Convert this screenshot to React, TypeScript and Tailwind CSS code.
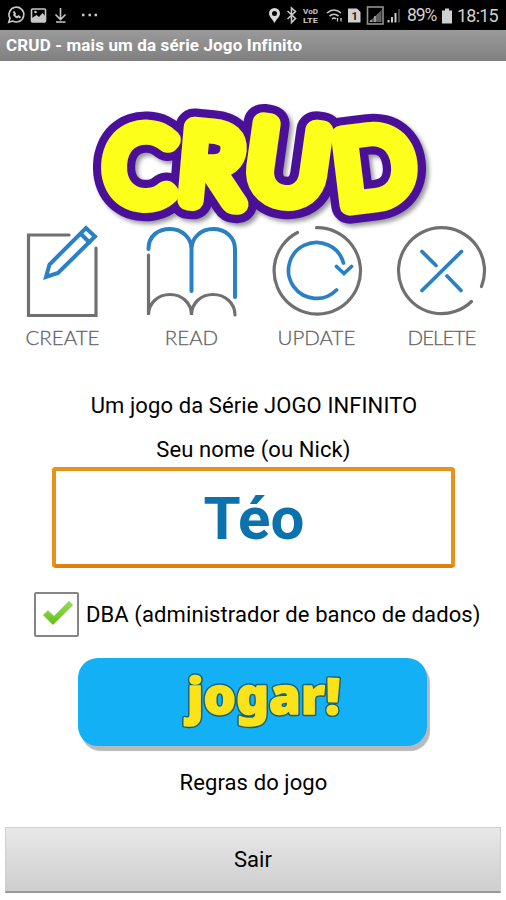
import type { ReactNode } from "react";
import { useState } from "react";

const BLUE = "#2a80c5";
const GRAY = "#707070";

const LOGO_LETTERS = [
	{ char: "C", transform: "translate(139.5 165.5) rotate(3) scale(0.86 0.86)" },
	{ char: "R", transform: "translate(211.5 165) rotate(5) scale(0.88 0.88)" },
	{ char: "U", transform: "translate(288 162.5) rotate(8) scale(0.94 0.88)" },
	{ char: "D", transform: "translate(374 166.5) rotate(-7) scale(0.88 0.85)" },
];

export default function App() {
	return (
		<main className="flex h-[900px] w-[506px] flex-col overflow-hidden bg-white font-['Roboto',sans-serif] text-black">
			<StatusBar />
			<header className="flex h-[31px] shrink-0 items-center bg-linear-to-b from-[#9a9a9a] to-[#808080] pl-[6px] text-[17px] font-bold text-white">
				<h1 className="whitespace-nowrap tracking-[0.14px]">
					CRUD - mais um da série Jogo Infinito
				</h1>
			</header>

			<section className="mt-[35px] h-[260px] shrink-0">
				<CrudLogo />
				<div className="relative flex">
					<Feature label="CREATE" viewBox="0 224 125 96" className="mr-1">
						<path
							d="M69 235H28.500V315.500H96V248"
							stroke={GRAY}
							strokeWidth="3.200"
						/>
						<path
							d="M46 277L49.500 264.500L86 228L95 236.500L58 273Z M80.500 233.500L89.500 242.500"
							stroke={BLUE}
							strokeWidth="4"
						/>
					</Feature>
					<Feature label="READ" viewBox="129 224 125 96">
						<path
							d="M148.500 255V315C148.500 303 158 294.500 170 294.500S191.500 303 191.500 315C191.500 303 201 294.500 213 294.500S235 303 235 315"
							stroke={GRAY}
							strokeWidth="3.200"
						/>
						<path
							d="M148.500 249C148.500 236 158 229 170 229S191.500 238 191.500 249V291M191.500 249C191.500 238 201 229 213 229S235 237 235 249V297"
							stroke={BLUE}
							strokeWidth="4"
						/>
					</Feature>
					<Feature label="UPDATE" viewBox="254 224 125 96">
						<path
							d="M316.500 227.700A43.200 43.200 0 1 1 297.500 232.500"
							stroke={GRAY}
							strokeWidth="3.200"
						/>
						<path
							d="M336.500 290A28 28 0 1 1 343.500 263M336.500 266.500L344 273.500L351.500 266.500"
							stroke={BLUE}
							strokeWidth="3.700"
						/>
					</Feature>
					<Feature
						label="DELETE"
						viewBox="379 224 125 96"
						className="tracking-[-0.9px]"
					>
						<path
							d="M481.500 286.500A43 43 0 1 0 471.500 301.500"
							stroke={GRAY}
							strokeWidth="3.200"
						/>
						<path
							d="M461.500 251.500L422 290.500M422 251.500L436 265.500M447 276L461 290.500"
							stroke={BLUE}
							strokeWidth="3.700"
						/>
					</Feature>
				</div>
			</section>

			<PlayerForm />
		</main>
	);
}

function StatusBar() {
	return (
		<div className="flex h-[30px] shrink-0 items-center bg-black text-[18px] text-[#d0d0d0]">
			<svg
				width="400"
				height="30"
				viewBox="0 0 400 30"
				fill="none"
				stroke="#c8c8c8"
				strokeWidth="1.600"
				className="shrink-0"
			>
				{/* chat */}
				<path d="M8.800 22.200L10 18.300A7.400 7.400 0 1 1 12.700 21Z" />
				<path
					d="M13.500 11.500L15 13.800L14.200 15Q15.500 17 17.200 17.300L18.500 16.300L20.500 17.800"
					strokeWidth="2"
				/>
				{/* gallery */}
				<rect x="31.500" y="9" width="14" height="13" rx="1" />
				<path
					d="M32 20V18L36.500 15L39 17L42.500 13L46 17V22H32Z"
					fill="#c8c8c8"
					stroke="none"
				/>
				<circle cx="35.500" cy="12" r="1.300" fill="#c8c8c8" stroke="none" />
				{/* download */}
				<path d="M60.500 8V19M55.500 14.500L60.500 19.500L65.500 14.500M56 22H65.500" />
				<path d="M82 15H84.500M88.500 15H91M94.500 15H97" strokeWidth="2.300" />
				{/* location */}
				<path
					d="M274.500 23C272 18.500 269 16.500 269 13.500A5.500 5.500 0 0 1 280 13.500C280 16.500 277 18.500 274.500 23ZM274.500 11A2.500 2.500 0 1 0 274.500 16A2.500 2.500 0 1 0 274.500 11Z"
					fill="#d8d8d8"
					fillRule="evenodd"
					stroke="none"
				/>
				{/* bluetooth */}
				<path d="M287.500 11L295.500 18.500L291.500 22.500V8L295.500 11.500L287.500 19" />
				<g
					fill="#c8c8c8"
					stroke="none"
					fontFamily="Roboto, sans-serif"
					fontWeight="700"
					fontSize="8"
				>
					<text x="303" y="14" textLength="15" lengthAdjust="spacingAndGlyphs">
						VoD
					</text>
					<text x="303" y="22.500" textLength="15" lengthAdjust="spacingAndGlyphs">
						LTE
					</text>
				</g>
				{/* wifi */}
				<path d="M327 13Q334 7 341 13M329.500 16Q334 12.500 338.500 16M332 19Q334 17 336 19" />
				<path d="M337.500 21.500V18M341 18V21.500" strokeWidth="1.300" />
				{/* sim */}
				<path d="M348 8.500H357L360.500 12V22.500H348Z" fill="#d0d0d0" stroke="none" />
				<text
					x="351.500"
					y="19.500"
					fontSize="11"
					fontWeight="700"
					fill="#222"
					stroke="none"
					fontFamily="Roboto, sans-serif"
				>
					1
				</text>
				{/* signal */}
				<rect x="367.500" y="7" width="15.500" height="17" stroke="#929292" />
				<path d="M369 22L381.500 10V22Z" fill="#606060" stroke="none" />
				<path d="M371 20V22M375 16V22" stroke="#aaa" />
				<path d="M388.500 20V22.500M392 17V22.500M395.500 13V22.500" strokeWidth="2" />
				<path d="M399 9V22.500" stroke="#555" />
			</svg>
			<div className="flex grow items-center pt-px pl-[7px]">
				<span className="w-[34px] whitespace-nowrap text-[17.5px] tracking-[-1.1px]">
					89%
				</span>
				<svg width="12" height="16" viewBox="0 0 12 16" fill="#d0d0d0">
					<path d="M4 0.500H8V2.500H11V15.500H1V2.500H4Z" />
				</svg>
				<span className="whitespace-nowrap pl-[4px] tracking-[-0.8px]">
					18:15
				</span>
			</div>
		</div>
	);
}

function CrudLogo() {
	return (
		<svg
			width="506"
			height="176"
			viewBox="0 76 506 176"
			className="-mt-[20px] -mb-[28px] block overflow-visible drop-shadow-[3px_3px_2px_rgba(0,0,0,0.4)]"
			fontFamily="Lato, sans-serif"
			fontWeight="300"
			fontSize="117"
			textAnchor="middle"
			strokeLinejoin="round"
		>
			<g fill="#4a109a" stroke="#4a109a" strokeWidth="43">
				<LogoLetters />
			</g>
			<g fill="#fcff1a" stroke="#fcff1a" strokeWidth="24">
				<LogoLetters />
			</g>
		</svg>
	);
}

function LogoLetters() {
	return LOGO_LETTERS.map(({ char, transform }) => (
		<text key={char} y="42" transform={transform}>
			{char}
		</text>
	));
}

type FeatureProps = {
	label: string;
	viewBox: string;
	className?: string;
	children: ReactNode;
};

function Feature({ label, viewBox, className, children }: FeatureProps) {
	return (
		<div
			className={`flex w-[125px] shrink-0 flex-col items-center ${className ?? ""}`}
		>
			<svg
				width="125"
				height="96"
				viewBox={viewBox}
				fill="none"
				strokeLinecap="round"
			>
				{children}
			</svg>
			<span className="mt-[4px] font-['Lato',sans-serif] text-[20.5px] leading-[26px] font-light text-[#555] [-webkit-text-stroke:0.3px_#777]">
				{label}
			</span>
		</div>
	);
}

function PlayerForm() {
	const [name, setName] = useState("Téo");
	const [isDba, setIsDba] = useState(true);

	return (
		<form
			className="flex grow flex-col items-center pt-[36px] text-[22px] leading-[28px] tracking-[0.1px]"
			onSubmit={(event) => event.preventDefault()}
		>
			<p className="pl-[2px] whitespace-nowrap">
				Um jogo da Série JOGO INFINITO
			</p>
			<label htmlFor="nick" className="mt-[16px] pl-px">
				Seu nome (ou Nick)
			</label>
			<input
				id="nick"
				value={name}
				onChange={(event) => setName(event.target.value)}
				className="mt-[3px] h-[101px] w-[403px] rounded-[4px] border-4 border-[#e8921e] border-b-[#df8010] bg-white pt-[2px] pl-[2px] text-center text-[60px] font-bold text-[#0b72ad] outline-none"
			/>
			<label className="mt-[24px] flex items-center self-start pl-[34px]">
				<input
					type="checkbox"
					className="sr-only"
					checked={isDba}
					onChange={(event) => setIsDba(event.target.checked)}
				/>
				<span className="flex size-[45px] items-center justify-center rounded-[2px] border-2 border-[#858585]">
					{isDba ? <CheckMark /> : null}
				</span>
				<span className="pl-[7px] whitespace-nowrap">
					DBA (administrador de banco de dados)
				</span>
			</label>
			<button
				type="submit"
				className="mt-[21px] mr-[2px] h-[88px] w-[349px] rounded-[20px] bg-[#13b0f5] shadow-[3px_5px_1px_#b9b9bd]"
			>
				<svg width="349" height="88" viewBox="78 658 349 88">
					<g
						fontFamily="'Noto Sans', sans-serif"
						fontWeight="900"
						fontSize="50"
						strokeLinejoin="round"
					>
						<g fill="#12627a" stroke="#12627a" strokeWidth="4.500">
							<PlayCaption />
						</g>
						<g fill="#fbe219" stroke="#fbe219" strokeWidth="1.600">
							<PlayCaption />
						</g>
					</g>
				</svg>
			</button>
			<a href="#regras" className="mt-[23px] pl-px">
				Regras do jogo
			</a>
			<button
				type="button"
				className="mt-[30px] h-[66px] w-[496px] border border-[#cfcfcf] border-b-2 border-b-[#999] bg-linear-to-b from-[#e8e8e8] to-[#cecece]"
			>
				Sair
			</button>
		</form>
	);
}

function PlayCaption() {
	return (
		<>
			<text x="187" y="714" textLength="138" lengthAdjust="spacingAndGlyphs">
				jogar
			</text>
			<text transform="translate(325 714) rotate(2)">!</text>
		</>
	);
}

function CheckMark() {
	return (
		<svg width="32" height="28" viewBox="0 0 32 28" className="-mt-[3px] ml-[2px]">
			<defs>
				<linearGradient id="check" x1="0" y1="0" x2="0" y2="1">
					<stop offset="0" stopColor="#9bdc5c" />
					<stop offset="1" stopColor="#62bf12" />
				</linearGradient>
			</defs>
			<path
				d="M1 16L6 11.500L12 17L27 2L31 6L11 26Z"
				fill="url(#check)"
				stroke="#b5e08c"
				strokeWidth="0.800"
			/>
		</svg>
	);
}
